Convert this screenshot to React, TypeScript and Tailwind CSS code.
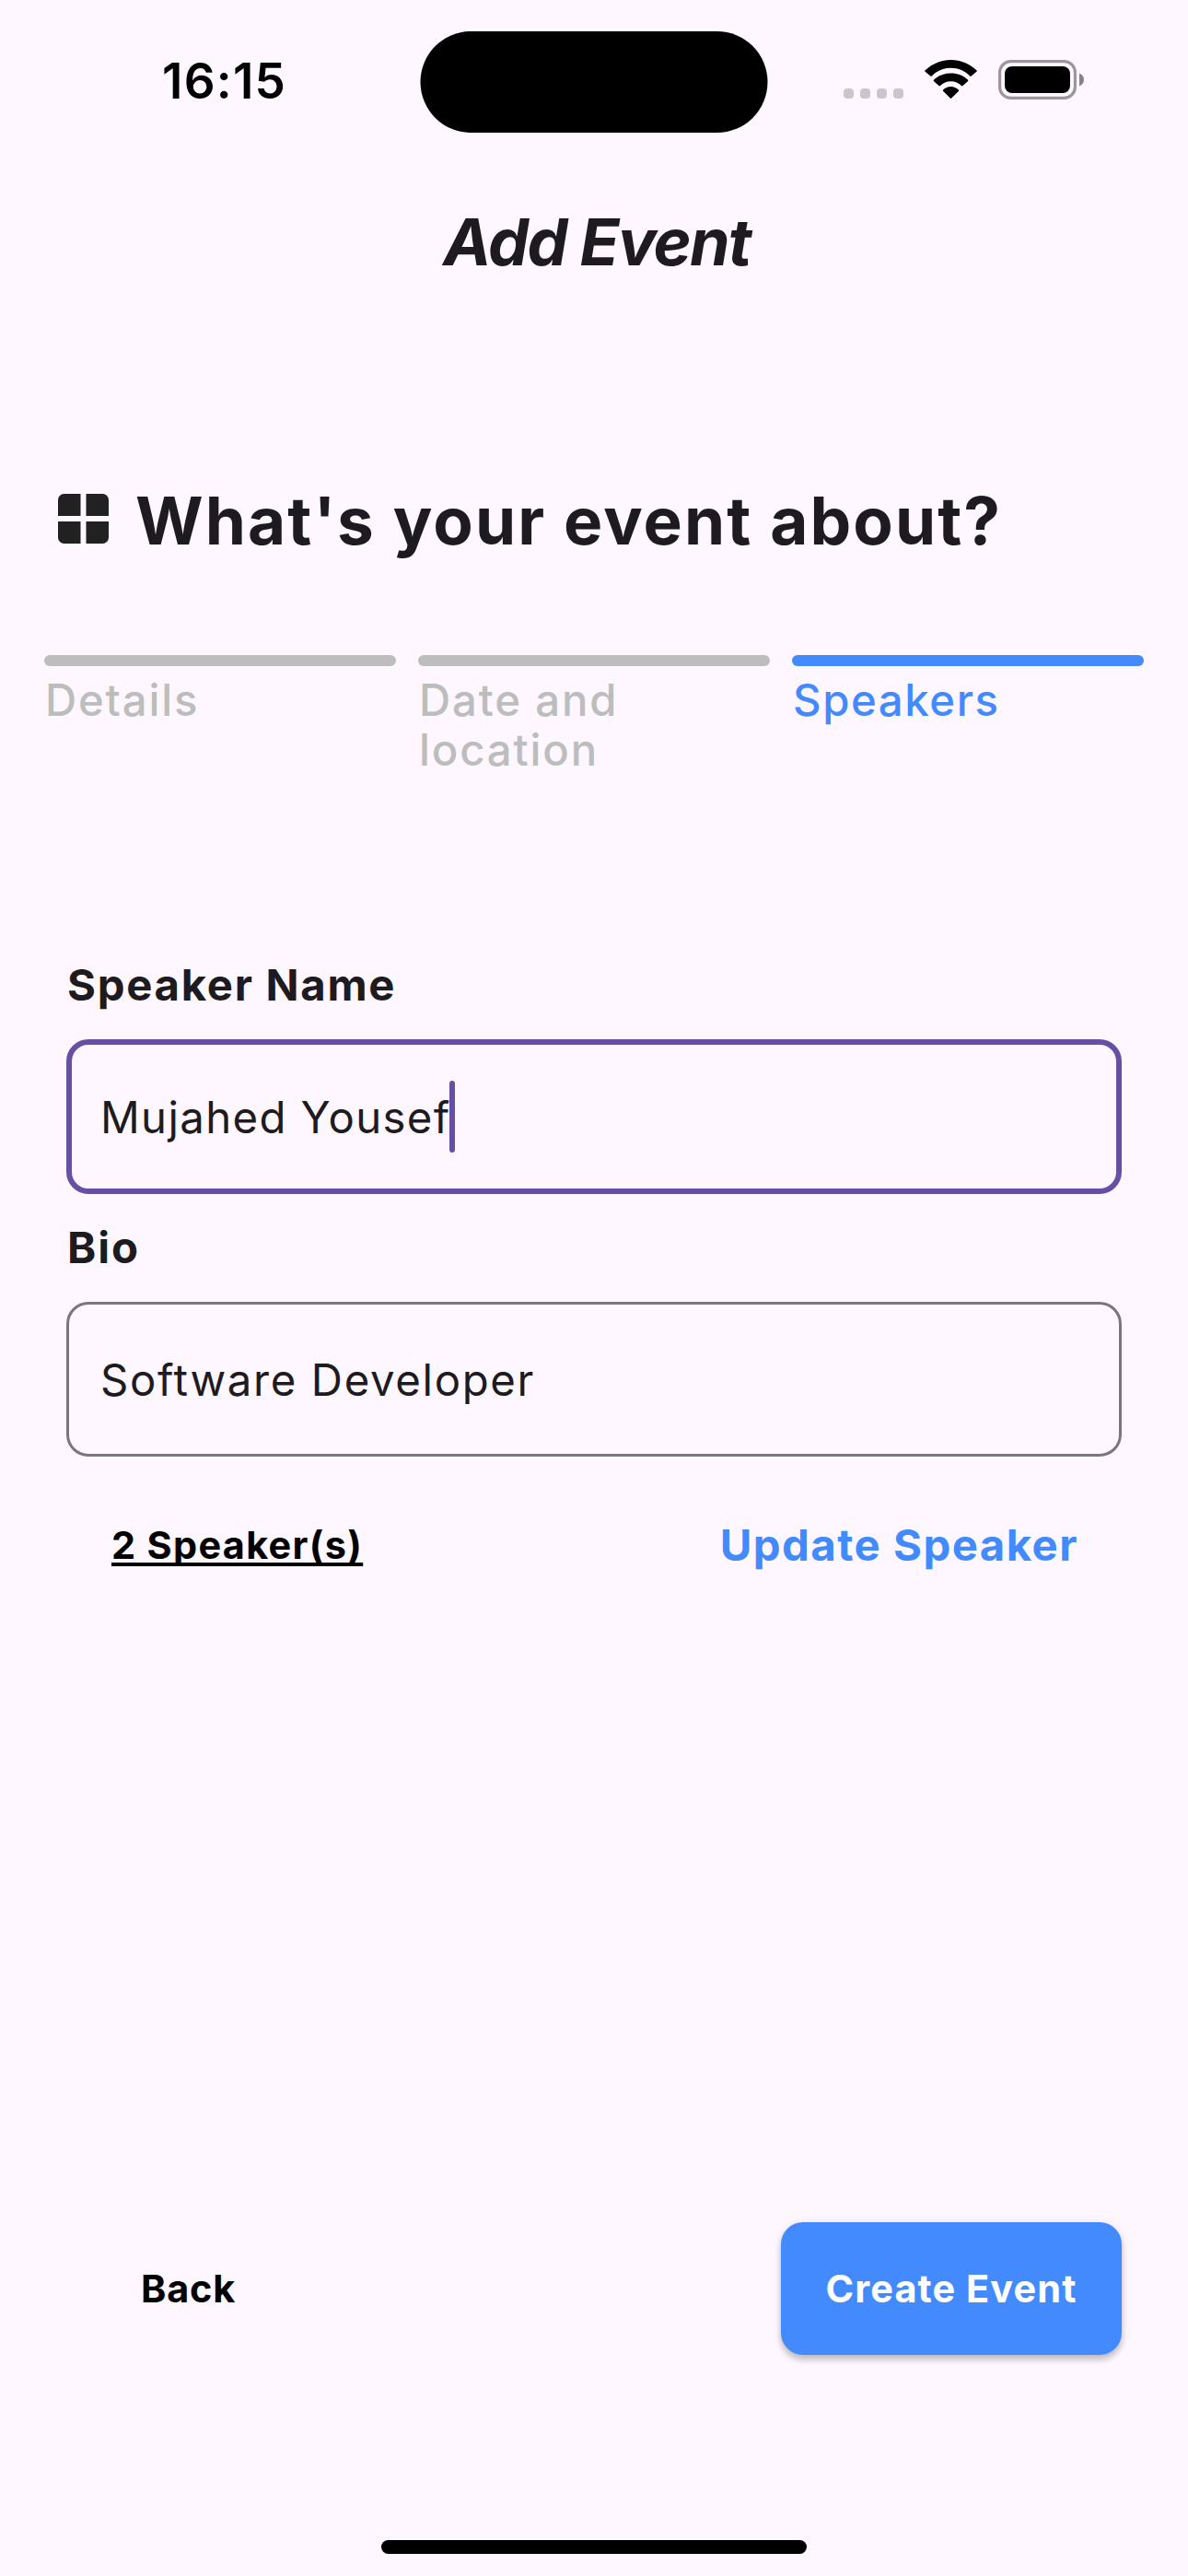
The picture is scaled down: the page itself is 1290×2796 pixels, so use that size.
type StepProps = { label: string; active?: boolean };

function StatusBar() {
  return (
    <header className="relative flex h-[177px] items-start justify-between pr-[112px] pl-[176px] text-black">
      <time className="mt-[57px] text-[53px] leading-[62px] font-semibold tracking-[1.25px]">16:15</time>
      <div className="absolute top-[33.5px] left-1/2 h-[110.5px] w-[377px] -translate-x-1/2 rounded-full bg-black" />
      <div className="mt-[65px] flex h-[43px] items-start">
        <div className="mt-[31px] mr-[23px] flex gap-[7px]">
          {[0, 1, 2, 3].map((dot) => (
            <span key={dot} className="h-[11px] w-[11px] rounded-[4px] bg-[#cbc6cc]" />
          ))}
        </div>
        <svg className="mr-[23px] h-[42px] w-[57px]" viewBox="0 0 57 42" fill="#000">
          <path d="M28.5 8.7c8 0 15.3 3.1 20.7 8.8.5.5 1 .5 1.500 0l5.700-4.700c.6-.5.6-1 0-1.500C48.700 4.200 39 0 28.500 0S8.300 4.200.6 11.300c-.6.5-.6 1 0 1.500L6.300 17.500c.5.500 1 .5 1.500 0C13.200 11.800 20.500 8.700 28.500 8.700Z" />
          <path d="M28.500 23.200c4.400 0 8.400 1.800 11.500 4.900.5.4 1.100.4 1.500 0l5.400-4.900c.5-.5.5-1.100 0-1.600-4.800-4.600-11.200-7.100-18.400-7.100s-13.600 2.500-18.400 7.100c-.5.5-.5 1.100 0 1.600l5.400 4.900c.4.4 1 .4 1.500 0 3.100-3.100 7.100-4.900 11.500-4.900Z" />
          <path d="M36.800 32.400c.5.500.5 1 0 1.500l-7.600 7.700c-.4.500-1 .5-1.400 0L20.200 33.900c-.5-.5-.5-1 0-1.500 2.200-2.100 5.100-3.400 8.300-3.400s6.100 1.300 8.300 3.400Z" />
        </svg>
        <svg className="h-[43px] w-[94px]" viewBox="0 0 94 43">
          <rect x="1.600" y="1.600" width="81.800" height="39.800" rx="12" fill="none" stroke="#9c969d" strokeWidth="3.200" />
          <rect x="7" y="7" width="71" height="29" rx="8" fill="#000" />
          <path d="M88 14.500c3 1.200 5 4 5 7s-2 5.800-5 7Z" fill="#868187" />
        </svg>
      </div>
    </header>
  );
}

function Step({ label, active }: StepProps) {
  return (
    <li>
      <div className={active ? "h-3 rounded-full bg-[#448aff]" : "h-3 rounded-full bg-[#bdbdbd]"} />
      <p
        className={
          active
            ? "mt-[10px] pl-px text-[47.3px] leading-[54px] font-medium tracking-[1.6px] text-[#448aff]"
            : "mt-[10px] pl-px text-[47.3px] leading-[54px] font-medium tracking-[1.85px] text-[#bdbdbd]"
        }
      >
        {label}
      </p>
    </li>
  );
}

export default function App() {
  return (
    <div className="flex h-[2796px] w-[1290px] flex-col bg-[#fef7ff] font-['Inter',sans-serif] text-[#1d1b20]">
      <StatusBar />
      <h1 className="flex h-[171px] items-center justify-center pl-[6px] text-[70px] leading-[84px] font-bold tracking-[-1.8px] italic">
        Add Event
      </h1>

      <main className="flex grow flex-col">
        <div className="mt-[175px] flex h-[84px] items-center pl-[63px]">
          <svg className="mt-[-5px] mr-[29px] h-[54px] w-[55px]" viewBox="0 0 55 54" fill="#212121">
            <path d="M6.500 0H24.500V24H0V6.500A6.500 6.500 0 0 1 6.500 0Z" />
            <path d="M30.500 0H48.500A6.500 6.500 0 0 1 55 6.500V24H30.500Z" />
            <path d="M0 30H24.500V54H6.500A6.500 6.500 0 0 1 0 47.500Z" />
            <path d="M30.500 30H55V47.500A6.500 6.500 0 0 1 48.500 54H30.500Z" />
          </svg>
          <h2 className="text-[71px] leading-[84px] font-bold tracking-[2.08px]">What&apos;s your event about?</h2>
        </div>

        <ol className="mt-[104px] grid grid-cols-3 gap-6 px-12">
          <Step label="Details" />
          <Step label="Date and location" />
          <Step label="Speakers" active />
        </ol>

        <form className="mt-[201px] flex flex-col px-[72px]">
          <label className="pl-px text-[47.3px] leading-[54px] font-bold tracking-[1.7px]">Speaker Name</label>
          <div className="mt-8 flex h-[168px] items-center rounded-[24px] border-6 border-[#6750a4] pl-[31px]">
            <span className="relative pt-[2px] text-[47.3px] leading-[54px] tracking-[1.38px]">
              Mujahed Yousef
              <span className="absolute top-[-11px] left-[379px] h-[78px] w-[6px] rounded-full bg-[#6750a4]" />
            </span>
          </div>
          <label className="mt-[31px] pl-px text-[47.3px] leading-[54px] font-bold tracking-[1.9px]">Bio</label>
          <div className="mt-8 flex h-[168px] items-center rounded-[24px] border-3 border-[#7a757f] pl-[34px]">
            <span className="pt-[2px] text-[47.3px] leading-[54px] tracking-[1.66px]">Software Developer</span>
          </div>

          <div className="mt-[69px] flex items-start justify-between pr-[47px] pl-[49px]">
            <a className="text-[41.4px] leading-[54px] font-bold tracking-[1.34px] text-black underline decoration-[4px] underline-offset-[3.5px] [text-decoration-skip-ink:none]">
              2 Speaker(s)
            </a>
            <button type="button" className="text-[47.3px] leading-[54px] font-bold tracking-[1.48px] text-[#448aff]">
              Update Speaker
            </button>
          </div>
        </form>
      </main>

      <footer className="flex flex-col">
        <div className="flex h-[144px] items-center justify-between pr-[72px] pl-[153px]">
          <button type="button" className="text-[41.4px] leading-[54px] font-bold tracking-[0.8px] text-black">
            Back
          </button>
          <button
            type="button"
            className="h-[144px] w-[370px] rounded-[24px] bg-[#448aff] text-[41.4px] leading-[54px] font-bold tracking-[1.12px] text-white shadow-[0_6px_6px_rgba(0,0,0,0.16),0_2px_9px_rgba(0,0,0,0.14)]"
          >
            Create Event
          </button>
        </div>
        <div className="mt-[201px] mb-6 h-[15px] w-[462px] self-center rounded-full bg-black" />
      </footer>
    </div>
  );
}
